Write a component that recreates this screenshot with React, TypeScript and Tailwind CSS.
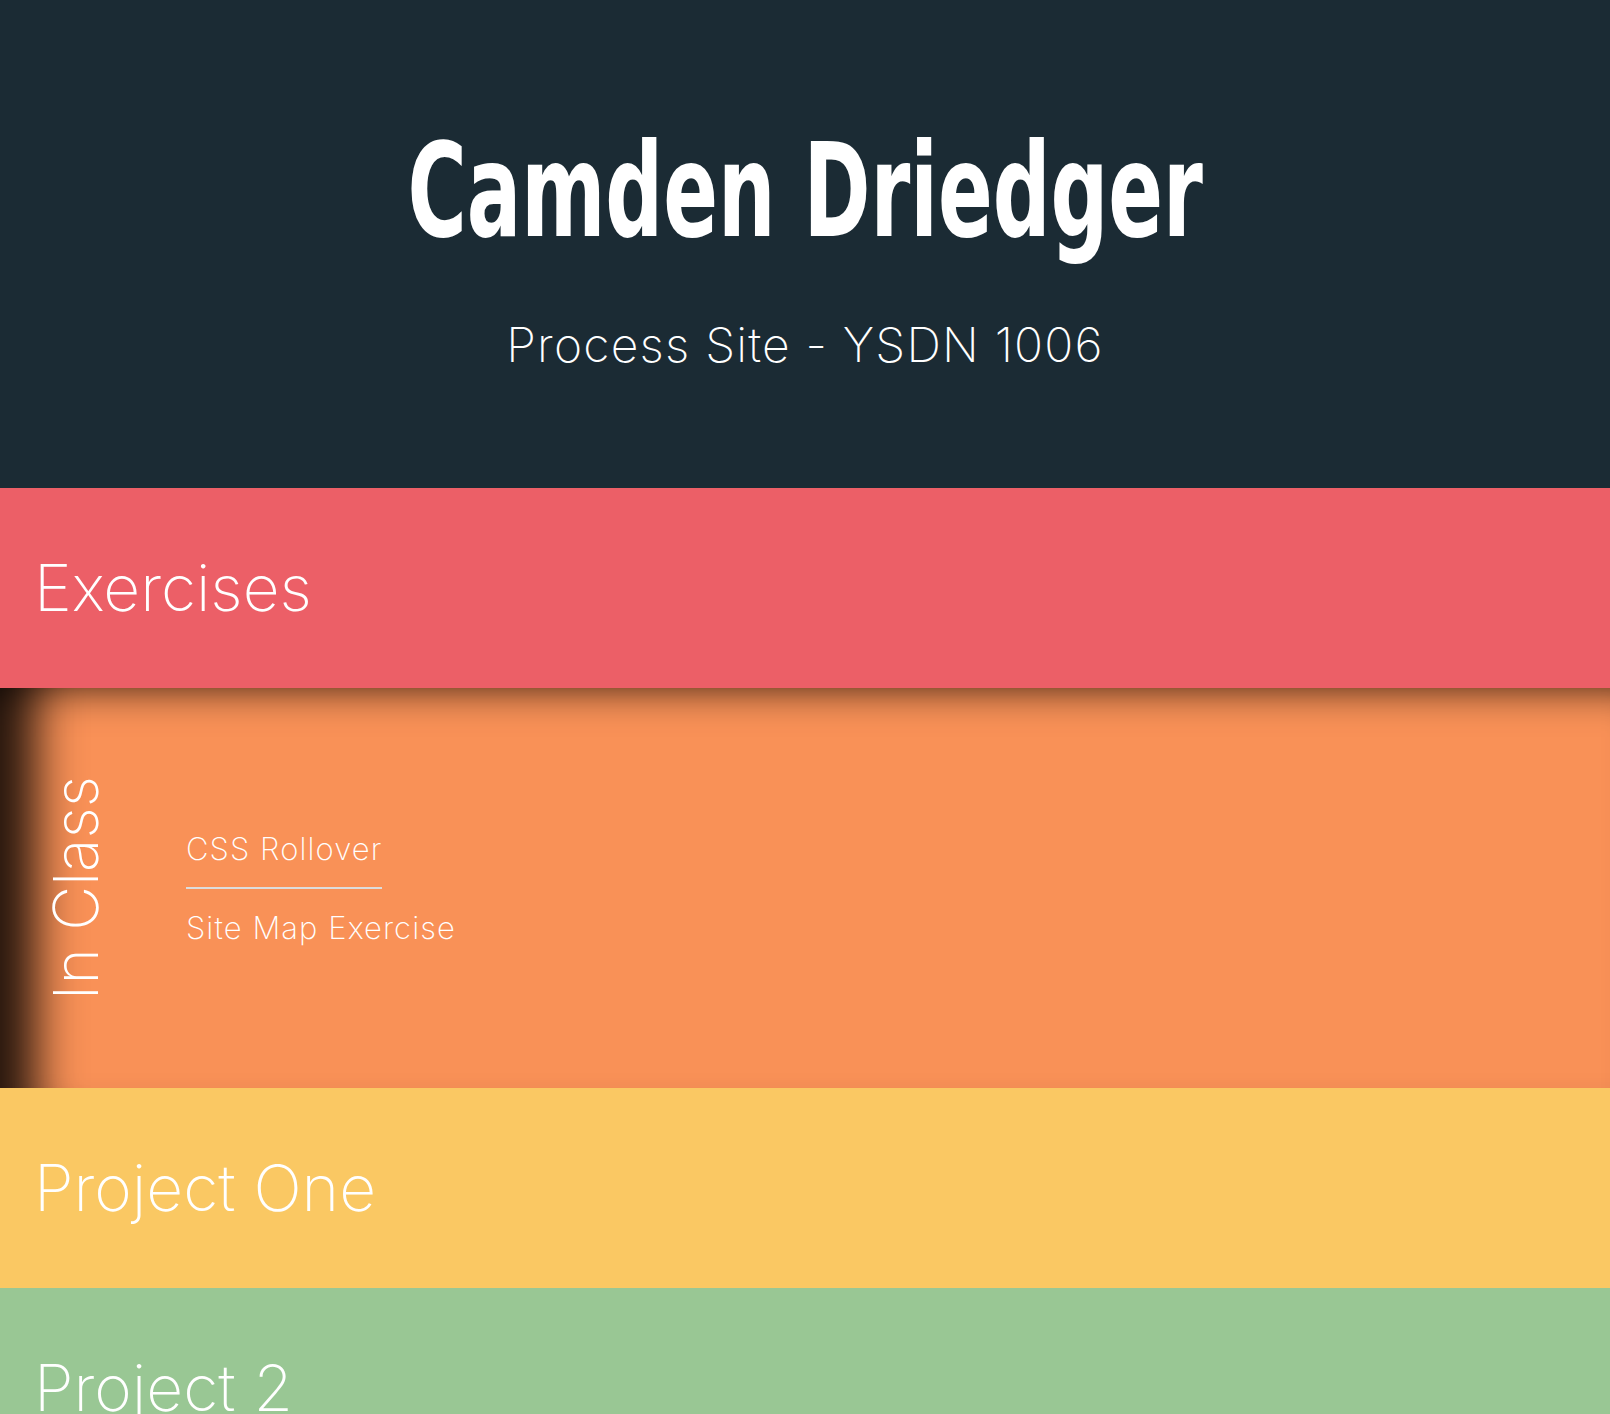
const light = "font-['Inter','Noto_Sans',sans-serif] font-extralight text-white";

function Band({ title, color }: { title: string; color: string }) {
  return (
    <section className={`flex h-[200px] items-center pl-[34px] ${color}`}>
      <h2 className={`${light} text-[64px] leading-none`}>{title}</h2>
    </section>
  );
}

export default function App() {
  return (
    <main className="w-full overflow-hidden">
      <header className="flex h-[488px] flex-col items-center bg-[#1b2b34] pt-[126px]">
        <h1 className="inline-block scale-x-[0.69] whitespace-nowrap font-['Liberation_Sans_Narrow','DejaVu_Sans_Condensed',sans-serif] text-[130px] font-bold leading-none text-white">
          Camden Driedger
        </h1>
        <p className={`${light} mt-[65px] text-[48px] leading-none tracking-[0.025em]`}>Process Site - YSDN 1006</p>
      </header>

      <Band title="Exercises" color="bg-[#ec5f67]" />

      <section className="flex h-[400px] items-center gap-[79px] bg-[#f99157] pl-[45px] shadow-[inset_76px_0_46px_-40px_rgba(0,0,0,0.85),inset_0_40px_40px_-40px_rgba(0,0,0,0.75)]">
        <h2 className={`${light} rotate-180 text-[62px] leading-none [writing-mode:vertical-rl]`}>In Class</h2>
        <nav className="flex flex-col items-start">
          <a href="#" className={`${light} border-b-2 border-[#dcdcdc] pb-[23px] text-[31px] leading-none tracking-[0.035em]`}>
            CSS Rollover
          </a>
          <a href="#" className={`${light} mt-[23px] text-[31px] leading-none tracking-[0.035em]`}>
            Site Map Exercise
          </a>
        </nav>
      </section>

      <Band title="Project One" color="bg-[#fac863]" />
      <Band title="Project 2" color="bg-[#99c794]" />
    </main>
  );
}
